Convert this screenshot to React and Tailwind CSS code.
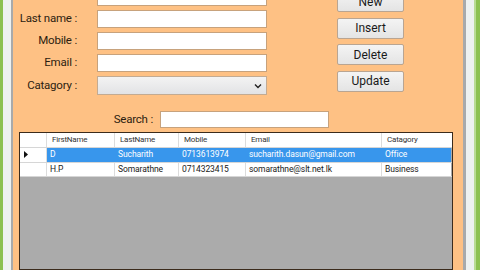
const labelFont = { fontFamily: 'Roboto, "Liberation Sans", sans-serif' }

const rows = [
  { fn: 'D', ln: 'Sucharith', mobile: '0713613974', email: 'sucharith.dasun@gmail.com', cat: 'Office', selected: true },
  { fn: 'H.P', ln: 'Somarathne', mobile: '0714323415', email: 'somarathne@slt.net.lk', cat: 'Business' },
]

const columns = ['FirstName', 'LastName', 'Mobile', 'Email', 'Catagory']

function TextBox({ className = '' }) {
  return <div className={`h-[18px] w-[170px] border border-[#c7a27c] bg-white ${className}`}></div>
}

function FieldLabel({ text }) {
  return (
    <span className="flex w-[64px] justify-end whitespace-nowrap text-[11.5px] leading-none tracking-[-0.2px] text-[#2c1d10]">
      {text}
    </span>
  )
}

function FormButton({ label }) {
  return (
    <button
      type="button"
      className="flex h-[21px] w-[67px] items-center justify-center rounded-[2px] border border-[#b9a592] bg-[linear-gradient(180deg,#f4f4f4_0%,#e4e4e4_100%)] text-[12px] text-[#1a1a1a]"
    >
      {label}
    </button>
  )
}

export default function App() {
  const labels = ['First Name :', 'Last name :', 'Mobile :', 'Email :']

  return (
    <div className="flex h-[270px] w-[480px] overflow-hidden bg-[#eef2f1]" style={labelFont}>
      <div className="w-[3px] bg-[#8cc152]"></div>
      <div className="w-[8px] bg-[#eef2f1]"></div>
      <div className="w-[2px] bg-[#a8aaab]"></div>

      <main className="flex w-[450px] flex-col bg-[#fec184]">
        <div className="flex items-start">
          {/* form fields */}
          <div className="mt-[-12px] flex flex-col gap-[4px]">
            {labels.map((label) => (
              <div key={label} className="flex h-[18px] items-center">
                <FieldLabel text={label} />
                <TextBox className="ml-[20px]" />
              </div>
            ))}
            <div className="flex h-[19px] items-center">
              <FieldLabel text="Catagory :" />
              <div className="ml-[20px] flex h-[19px] w-[170px] items-center justify-end border border-[#c3ab92] bg-[linear-gradient(180deg,#f3f3f3_0%,#e2e3e5_100%)] pr-[4px]">
                <svg width="8" height="6" viewBox="0 0 8 6">
                  <path d="M1 1.5 L4 4.5 L7 1.5" fill="none" stroke="#222" strokeWidth="1.4" />
                </svg>
              </div>
            </div>
          </div>

          {/* action buttons */}
          <div className="ml-[70px] mt-[-9px] flex flex-col gap-[5.5px]">
            <FormButton label="New" />
            <FormButton label="Insert" />
            <FormButton label="Delete" />
            <FormButton label="Update" />
          </div>
        </div>

        {/* search */}
        <div className="mt-[16px] flex h-[17px] items-center">
          <span className="flex w-[140px] justify-end whitespace-nowrap text-[11.5px] leading-none tracking-[-0.2px] text-[#2c1d10]">
            Search :
          </span>
          <div className="ml-[7px] h-[17px] w-[169px] border border-[#c7a27c] bg-white"></div>
        </div>

        {/* data grid */}
        <div className="ml-[6px] mr-[10px] mt-[4px] flex flex-1 flex-col border border-[#3b2b1c] bg-[#ababab]">
          <div className="grid h-[15px] grid-cols-[27px_68px_64px_67px_136px_69px] border-b border-[#d6d6d6] bg-white text-[8px] tracking-[-0.2px] text-[#333]">
            <div className="border-r border-[#dcdcdc]"></div>
            {columns.map((col) => (
              <div key={col} className="flex items-center border-r border-[#dcdcdc] pl-[5px] last:border-r-0">
                {col}
              </div>
            ))}
          </div>
          {rows.map((row) => (
            <div
              key={row.mobile}
              className="grid h-[14.5px] grid-cols-[27px_68px_64px_67px_136px_69px] border-b border-[#d6d6d6] text-[8.5px] tracking-[-0.1px]"
            >
              <div className="flex items-center border-r border-[#dcdcdc] bg-white pl-[4px]">
                {row.selected && (
                  <svg width="4" height="7" viewBox="0 0 4 7">
                    <path d="M0 0 L4 3.5 L0 7 Z" fill="#111" />
                  </svg>
                )}
              </div>
              {[row.fn, row.ln, row.mobile, row.email, row.cat].map((value, index) => (
                <div
                  key={index}
                  className={`flex items-center border-r pl-[3px] last:border-r-0 ${
                    row.selected ? 'border-[#3896ec] bg-[#3896ec] text-white' : 'border-[#dcdcdc] bg-white text-[#1a1a1a]'
                  }`}
                >
                  {value}
                </div>
              ))}
            </div>
          ))}
        </div>
      </main>

      <div className="w-[3px] bg-[#a8aaab]"></div>
      <div className="w-[8px] bg-[#eef2f1]"></div>
      <div className="w-[2px] bg-[#b9dc95]"></div>
      <div className="w-[4px] bg-[#8cc152]"></div>
    </div>
  )
}
